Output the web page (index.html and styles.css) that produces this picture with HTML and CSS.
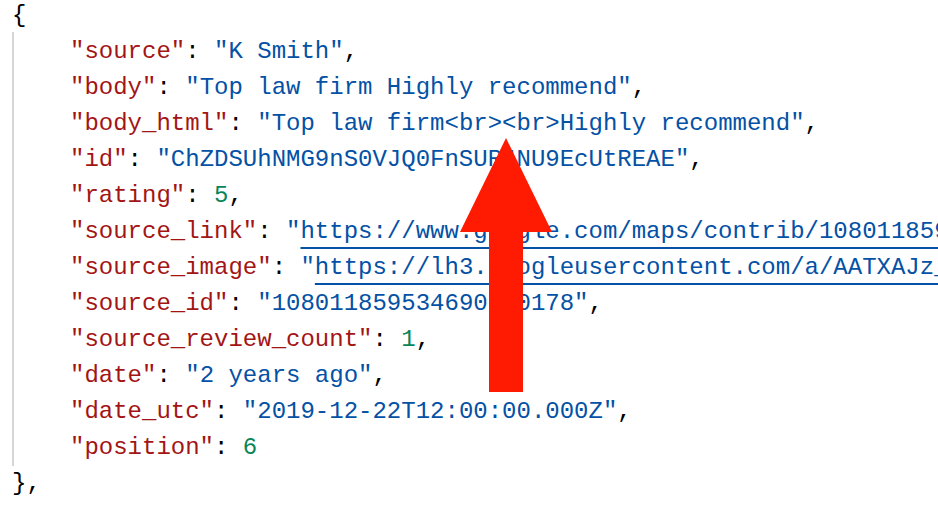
FILE: index.html
```html
<!DOCTYPE html>
<html lang="en">
<head>
<meta charset="utf-8">
<title>JSON review</title>
<link rel="stylesheet" href="styles.css">
</head>
<body>
<div class="viewer">
  <div class="line open"><span class="p">{</span></div>
  <div class="obj">
    <div class="line"><span class="k">"source"</span><span class="p">: </span><span class="s">"K Smith"</span><span class="p">,</span></div>
    <div class="line"><span class="k">"body"</span><span class="p">: </span><span class="s">"Top law firm Highly recommend"</span><span class="p">,</span></div>
    <div class="line"><span class="k">"body_html"</span><span class="p">: </span><span class="s">"Top law firm&lt;br&gt;&lt;br&gt;Highly recommend"</span><span class="p">,</span></div>
    <div class="line"><span class="k">"id"</span><span class="p">: </span><span class="s">"ChZDSUhNMG9nS0VJQ0FnSUR4NU9EcUtREAE"</span><span class="p">,</span></div>
    <div class="line"><span class="k">"rating"</span><span class="p">: </span><span class="n">5</span><span class="p">,</span></div>
    <div class="line"><span class="k">"source_link"</span><span class="p">: </span><span class="s">"<a class="u">https://www.google.com/maps/contrib/108011859534690800178?hl=en-US</a>"</span><span class="p">,</span></div>
    <div class="line"><span class="k">"source_image"</span><span class="p">: </span><span class="s">"<a class="u">https://lh3.googleusercontent.com/a/AATXAJz_example=s40-c-c0x00000000-cc-rp</a>"</span><span class="p">,</span></div>
    <div class="line"><span class="k">"source_id"</span><span class="p">: </span><span class="s">"108011859534690800178"</span><span class="p">,</span></div>
    <div class="line"><span class="k">"source_review_count"</span><span class="p">: </span><span class="n">1</span><span class="p">,</span></div>
    <div class="line"><span class="k">"date"</span><span class="p">: </span><span class="s">"2 years ago"</span><span class="p">,</span></div>
    <div class="line"><span class="k">"date_utc"</span><span class="p">: </span><span class="s">"2019-12-22T12:00:00.000Z"</span><span class="p">,</span></div>
    <div class="line"><span class="k">"position"</span><span class="p">: </span><span class="n">6</span></div>
  </div>
  <div class="line"><span class="p">},</span></div>
</div>
<svg class="arrow" width="938" height="506" viewBox="0 0 938 506" aria-hidden="true">
  <polygon points="506,138 552,232 523,232 523,392 489,392 489,232 460,232" fill="#fe1b02"/>
</svg>
</body>
</html>
```
FILE: styles.css
```css
html, body {
  margin: 0;
  padding: 0;
  background: #ffffff;
  width: 938px;
  height: 506px;
  overflow: hidden;
}

body {
  position: relative;
}

.viewer {
  font-family: "Liberation Mono", "DejaVu Sans Mono", monospace;
  font-size: 24px;
  line-height: 36px;
  padding-left: 12px;
  color: #000000;
}

.line {
  white-space: pre;
}

.open {
  line-height: 32px;
}

.obj {
  border-left: 2px solid #d6d6d6;
  padding-left: 56px;
  padding-top: 2px;
}

.k { color: #a31515; }
.s { color: #0451a5; }
.n { color: #098658; }
.p { color: #000000; }

.u {
  color: #0451a5;
  text-decoration: underline;
  text-decoration-thickness: 2px;
  text-underline-offset: 9px;
}

.arrow {
  position: absolute;
  left: 0;
  top: 0;
}
```
